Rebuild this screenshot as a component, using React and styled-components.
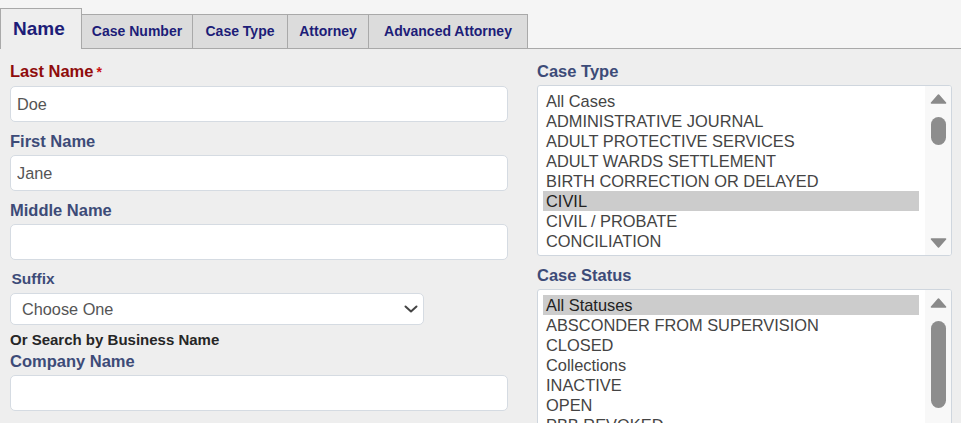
import React from 'react';
import styled, { createGlobalStyle } from 'styled-components';

const GlobalStyle = createGlobalStyle`
  html, body { margin: 0; padding: 0; overflow: hidden; background: #eeeeee; }
  body { font-family: "Liberation Sans", Arial, sans-serif; }
  * { box-sizing: border-box; }
`;

const Page = styled.div`
  width: 961px;
  height: 423px;
  overflow: hidden;
  background: #eeeeee;
`;

const TabBar = styled.div`
  display: flex;
  align-items: flex-end;
  height: 49px;
  padding-top: 8px;
  background: #f5f5f5;
  border-bottom: 1px solid #a9a9a9;
`;

const ActiveTab = styled.div`
  height: 41px;
  width: 82px;
  margin-bottom: -1px;
  border: 1px solid #a9a9a9;
  border-bottom: none;
  background: #eeeeee;
  display: flex;
  align-items: center;
  padding: 0 0 1px 12px;
  font-size: 19px;
  font-weight: bold;
  color: #1d1d78;
`;

const Tab = styled.div`
  height: 35px;
  width: ${p => p.$w}px;
  margin-bottom: -1px;
  border: 1px solid #a9a9a9;
  border-left: none;
  background: #dcdcdc;
  display: flex;
  align-items: center;
  justify-content: center;
  padding-bottom: 2px;
  font-size: 14px;
  font-weight: bold;
  color: #1d1d78;
  white-space: nowrap;
`;

const Content = styled.div`
  display: grid;
  grid-template-columns: 498px 415px;
  column-gap: 29px;
  padding: 13px 0 0 10px;
`;

const Column = styled.div`
  display: flex;
  flex-direction: column;
`;

const Field = styled.div`
  display: flex;
  flex-direction: column;
  margin-bottom: ${p => (p.$mb ?? 10)}px;
`;

const Label = styled.label`
  display: block;
  font-size: ${p => p.$size || 16.5}px;
  font-weight: bold;
  line-height: 18px;
  margin-bottom: 5px;
  padding-left: ${p => p.$inset || 0}px;
  color: ${p => p.$color || '#3d4b78'};
  white-space: nowrap;
`;

const Required = styled.span`
  margin-left: 3px;
  font-size: 14px;
  color: #cc1111;
`;

const Note = styled.div`
  font-size: 15px;
  font-weight: bold;
  line-height: 18px;
  margin-bottom: 3px;
  color: #262626;
`;

const TextInput = styled.input`
  width: 100%;
  height: 36px;
  border: 1px solid #d5dbe2;
  border-radius: 5px;
  background: #ffffff;
  padding: 0 6px;
  font-family: "Liberation Sans", Arial, sans-serif;
  font-size: 16.3px;
  color: #555555;
  outline: none;
`;

const SelectBox = styled.div`
  width: 414px;
  height: 32px;
  border: 1px solid #d5dbe2;
  border-radius: 5px;
  background: #ffffff;
  display: flex;
  align-items: center;
  justify-content: space-between;
  padding: 0 5px 0 11px;
  font-size: 16.3px;
  color: #555555;
`;

const ListBox = styled.div`
  height: 171px;
  border: 1px solid #cfd6de;
  border-radius: 3px;
  background: #ffffff;
  display: flex;
  overflow: hidden;
  margin-bottom: 10px;
`;

const Options = styled.div`
  flex: 1;
  padding: 5px 0 0 5px;
  margin-right: 6px;
  overflow: hidden;
`;

const Option = styled.div`
  height: 20px;
  line-height: 20px;
  padding-left: 3px;
  font-size: 16.4px;
  white-space: nowrap;
  color: ${p => (p.$selected ? '#222222' : '#444444')};
  background: ${p => (p.$selected ? '#cccccc' : 'transparent')};
`;

const Track = styled.div`
  width: 26px;
  background: #f8f8f8;
  display: flex;
  flex-direction: column;
  align-items: center;
  padding: 8px 0 7px;
`;

const Thumb = styled.div`
  width: 15px;
  height: ${p => p.$h}px;
  margin-top: 13px;
  border-radius: 8px;
  background: #8d8d8d;
`;

const DownSlot = styled.div`
  margin-top: auto;
  display: flex;
`;

const Arrow = ({ down }) => (
  <svg width="17" height="10" viewBox="0 0 17 10" style={{ display: 'block' }}>
    <path
      d={down ? 'M8.5 9 L15.5 1 L1.5 1 Z' : 'M8.5 1 L15.5 9 L1.5 9 Z'}
      fill="#8a8a8a"
      stroke="#8a8a8a"
      strokeWidth="1.6"
      strokeLinejoin="round"
    />
  </svg>
);

const Chevron = () => (
  <svg width="14" height="8" viewBox="0 0 14 8" style={{ display: 'block' }}>
    <polyline points="1.5,1.5 7,6.5 12.5,1.5" fill="none" stroke="#444" strokeWidth="2" strokeLinecap="round" strokeLinejoin="round" />
  </svg>
);

const List = ({ items, selected, thumb }) => (
  <ListBox>
    <Options>
      {items.map(it => (
        <Option key={it} $selected={it === selected}>{it}</Option>
      ))}
    </Options>
    <Track>
      <Arrow />
      <Thumb $h={thumb} />
      <DownSlot><Arrow down /></DownSlot>
    </Track>
  </ListBox>
);

const caseTypes = [
  'All Cases',
  'ADMINISTRATIVE JOURNAL',
  'ADULT PROTECTIVE SERVICES',
  'ADULT WARDS SETTLEMENT',
  'BIRTH CORRECTION OR DELAYED',
  'CIVIL',
  'CIVIL / PROBATE',
  'CONCILIATION',
  'CONSERVATORSHIP',
];

const statuses = [
  'All Statuses',
  'ABSCONDER FROM SUPERVISION',
  'CLOSED',
  'Collections',
  'INACTIVE',
  'OPEN',
  'PBB REVOKED',
  'PENDING',
  'REOPENED',
];

export default function App() {
  return (
    <Page>
      <GlobalStyle />
      <TabBar>
        <ActiveTab>Name</ActiveTab>
        <Tab $w={111}>Case Number</Tab>
        <Tab $w={95}>Case Type</Tab>
        <Tab $w={81}>Attorney</Tab>
        <Tab $w={159}>Advanced Attorney</Tab>
      </TabBar>
      <Content>
        <Column>
          <Field>
            <Label $color="#8f0c0c">Last Name<Required>*</Required></Label>
            <TextInput defaultValue="Doe" />
          </Field>
          <Field>
            <Label>First Name</Label>
            <TextInput defaultValue="Jane" />
          </Field>
          <Field>
            <Label>Middle Name</Label>
            <TextInput defaultValue="" />
          </Field>
          <Field $mb={6}>
            <Label $inset={1.5} $size={15.5}>Suffix</Label>
            <SelectBox>
              <span>Choose One</span>
              <Chevron />
            </SelectBox>
          </Field>
          <Note>Or Search by Business Name</Note>
          <Field>
            <Label>Company Name</Label>
            <TextInput defaultValue="" />
          </Field>
        </Column>
        <Column>
          <Label>Case Type</Label>
          <List items={caseTypes} selected="CIVIL" thumb={28} />
          <Label>Case Status</Label>
          <List items={statuses} selected="All Statuses" thumb={87} />
        </Column>
      </Content>
    </Page>
  );
}
